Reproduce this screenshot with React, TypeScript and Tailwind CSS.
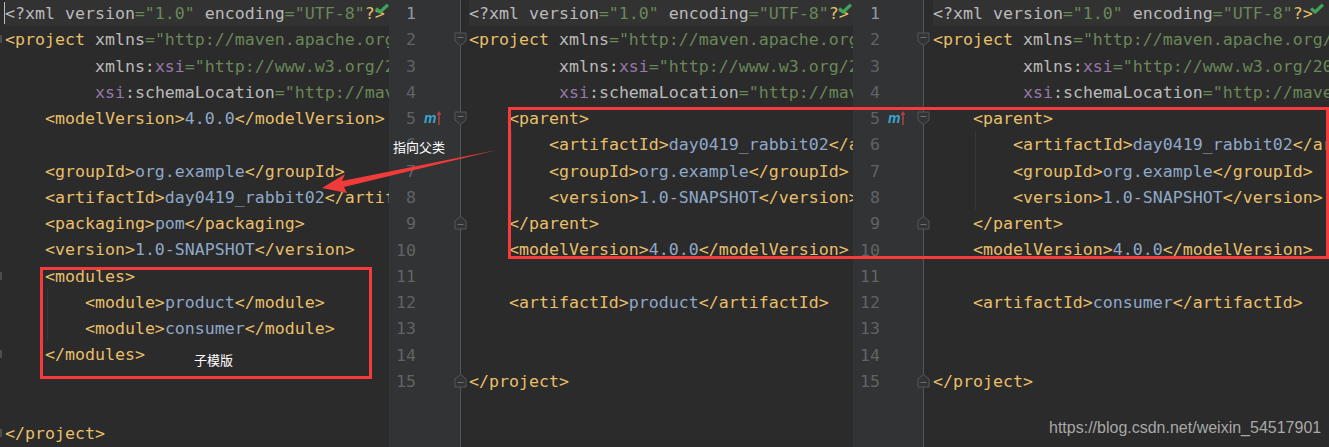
import React from "react";

type Kind = "t" | "v" | "a" | "s" | "n";
type Tok = [Kind, string];
type Line = { i?: number; toks?: Tok[]; guide?: boolean };

const color: Record<Kind, string> = {
  t: "text-[#e8bf6a]",
  v: "text-[#8fa8c8]",
  a: "text-[#bababa]",
  s: "text-[#6a8759]",
  n: "text-[#9876aa]",
};

const el = (i: number, open: string, val?: string, close?: string, guide?: boolean): Line => {
  const toks: Tok[] = [["t", open]];
  if (val) toks.push(["v", val]);
  if (close) toks.push(["t", close]);
  return { i, toks, guide };
};

const head: Line[] = [
  {
    toks: [
      ["a", "<?xml version"], ["s", "=\"1.0\""], ["a", " encoding"], ["s", "=\"UTF-8\""], ["t", "?>"],
    ],
  },
  { toks: [["t", "<project"], ["a", " xmlns"], ["s", "=\"http://maven.apache.org/POM/4.0.0\""]] },
  { i: 9, toks: [["a", "xmlns:"], ["n", "xsi"], ["s", "=\"http://www.w3.org/2001/XMLSchema-instance\""]] },
  { i: 9, toks: [["n", "xsi"], ["a", ":schemaLocation"], ["s", "=\"http://maven.apache.org/POM/4.0.0\""]] },
];

const parentBlock: Line[] = [
  el(4, "<parent>"),
  el(8, "<artifactId>", "day0419_rabbit02", "</artifactId>", true),
  el(8, "<groupId>", "org.example", "</groupId>", true),
  el(8, "<version>", "1.0-SNAPSHOT", "</version>", true),
  el(4, "</parent>"),
  el(4, "<modelVersion>", "4.0.0", "</modelVersion>"),
  {},
];

const panel1: Line[] = [
  ...head,
  el(4, "<modelVersion>", "4.0.0", "</modelVersion>"),
  {},
  el(4, "<groupId>", "org.example", "</groupId>"),
  el(4, "<artifactId>", "day0419_rabbit02", "</artifactId>"),
  el(4, "<packaging>", "pom", "</packaging>"),
  el(4, "<version>", "1.0-SNAPSHOT", "</version>"),
  el(4, "<modules>"),
  el(8, "<module>", "product", "</module>", true),
  el(8, "<module>", "consumer", "</module>", true),
  el(4, "</modules>"),
  {},
  {},
  el(0, "</project>"),
];

const child = (name: string): Line[] => [
  ...head,
  ...parentBlock,
  el(4, "<artifactId>", name, "</artifactId>"),
  {},
  {},
  el(0, "</project>"),
];

const edgeTicks = [1, 10, 13, 16];

function Check({ className }: { className: string }) {
  return (
    <svg viewBox="0 0 13 10" className={className}>
      <path d="M1 5 L4.8 8.2 L12 1.5" fill="none" stroke="#3fa35a" strokeWidth="3" />
    </svg>
  );
}

function CodeRow({ line, index, edge }: { line: Line; index: number; edge?: boolean }) {
  return (
    <div className={"relative h-[26.28px] whitespace-pre leading-[28px]" + (index === 0 ? " bg-[#323232]" : "")}>
      {edge && edgeTicks.includes(index) && (
        <span className="absolute -left-[5px] top-[9px] h-[8px] w-[2px] bg-[#4a4c4e]" />
      )}
      {line.guide && <span className="absolute left-[42px] top-0 h-full w-px bg-[#373737]" />}
      {" ".repeat(line.i ?? 0)}
      {(line.toks ?? []).map(([k, s], n) => (
        <span key={n} className={color[k]}>{s}</span>
      ))}
    </div>
  );
}

function Code({ lines, className, edge }: { lines: Line[]; className: string; edge?: boolean }) {
  return (
    <div className={"relative shrink-0 overflow-hidden " + className}>
      {lines.map((l, i) => (
        <CodeRow key={i} line={l} index={i} edge={edge} />
      ))}
    </div>
  );
}

function Fold({ dir }: { dir: "down" | "up" }) {
  const d = dir === "down" ? "M1 1 H12 V9 L6.5 13.5 L1 9 Z" : "M1 13 H12 V5 L6.5 0.5 L1 5 Z";
  const y = dir === "down" ? 5.5 : 8.5;
  return (
    <svg viewBox="0 0 13 14" className="relative z-10 -mr-[7px] ml-auto h-[14px] w-[13px] shrink-0">
      <path d={d} fill="#313335" stroke="#55585a" strokeWidth="1" />
      <path d={`M3.5 ${y} H9.5`} stroke="#6b6e70" strokeWidth="1" />
    </svg>
  );
}

function Gutter({ className }: { className: string }) {
  const folds: Record<number, "down" | "up"> = { 2: "down", 5: "down", 9: "up", 15: "up" };
  return (
    <div className={"shrink-0 border-r border-[#555555] bg-[#313335] " + className}>
      {Array.from({ length: 15 }, (_, k) => k + 1).map((n) => (
        <div key={n} className="flex h-[26.28px] items-center">
          <span className={"w-[27px] shrink-0 pt-[2px] text-right leading-[24px] " + (n === 1 ? "text-[#8e9bab]" : "text-[#606366]")}>{n}</span>
          {n === 5 && (
            <span className="ml-[8px] flex items-center">
              <span className="font-['Liberation_Sans',sans-serif] text-[14px] leading-none font-bold italic text-[#3aa3cf]">m</span>
              <svg viewBox="0 0 6 16" className="h-[16px] w-[6px]">
                <path d="M3 15 V4" stroke="#a8433f" strokeWidth="1.6" />
                <path d="M0.5 5 L3 1 L5.5 5 Z" fill="#a8433f" />
              </svg>
            </span>
          )}
          {folds[n] && <Fold dir={folds[n]} />}
        </div>
      ))}
    </div>
  );
}

export default function App() {
  return (
    <div className="relative flex h-[447px] w-[1329px] overflow-hidden bg-[#2b2b2b] font-['DejaVu_Sans_Mono','Liberation_Mono',monospace] text-[16.6px]">
      <Code lines={panel1} edge className="w-[389px] pl-[5px]" />
      <Gutter className="w-[72px]" />
      <Code lines={child("product")} className="w-[392px] pl-[8px]" />
      <Gutter className="w-[71px]" />
      <Code lines={child("consumer")} className="w-[405px] pl-[9px]" />

      <span className="absolute left-[4px] top-[2px] h-[22px] w-[1px] bg-[#bbbbbb]" />
      <Check className="absolute left-[375px] top-[3px] h-[11px] w-[14px]" />
      <Check className="absolute left-[838px] top-[3px] h-[11px] w-[14px]" />
      <Check className="absolute left-[1310px] top-[3px] h-[11px] w-[14px]" />

      <div className="absolute left-[40px] top-[267px] h-[112px] w-[332px] border-[3px] border-[#f53b3b]" />
      <div className="absolute left-[508px] top-[107px] h-[152px] w-[821px] border-[3px] border-[#f53b3b]" />

      <svg viewBox="0 0 1329 447" className="pointer-events-none absolute left-0 top-0 h-[447px] w-[1329px]">
        <path d="M497 150 L342 181 L345 174 L322 188 L347 193 L344 187 Z" fill="#f13a3a" />
      </svg>

      <span className="absolute left-[393px] top-[140px] font-['Liberation_Sans','Noto_Sans_CJK_SC',sans-serif] text-[13px] leading-[16px] text-white">指向父类</span>
      <span className="absolute left-[194px] top-[353px] font-['Liberation_Sans','Noto_Sans_CJK_SC',sans-serif] text-[13px] leading-[16px] text-white">子模版</span>
      <span className="absolute left-[1049px] top-[418px] font-['Liberation_Sans',sans-serif] text-[16px] leading-[20px] text-[#a8a8a8]">https://blog.csdn.net/weixin_54517901</span>
    </div>
  );
}
